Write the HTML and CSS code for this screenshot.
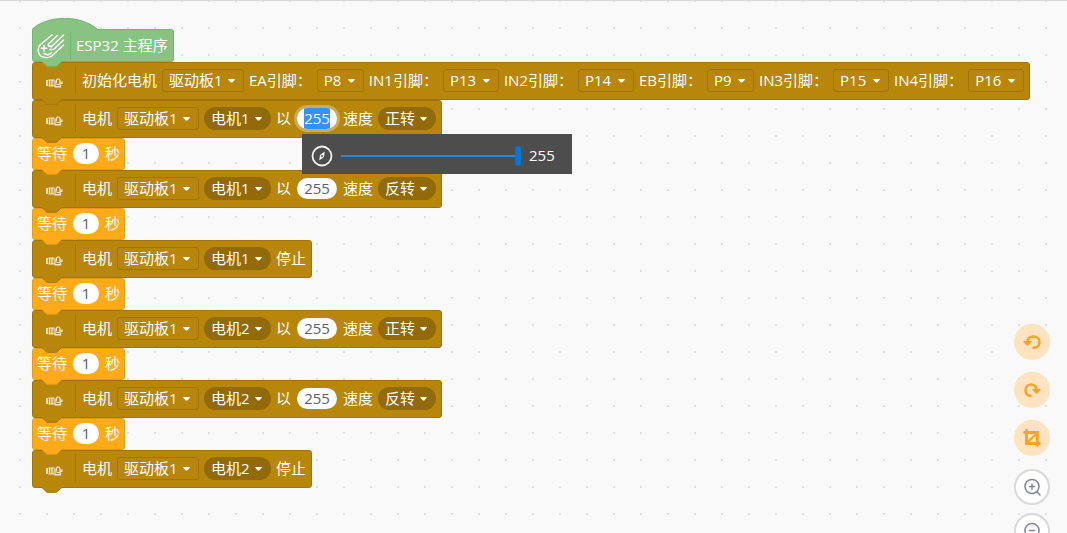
FILE: index.html
```
<!DOCTYPE html>
<html lang="zh-CN">
<head>
    <meta charset="UTF-8">
    <meta name="viewport" content="width=device-width, initial-scale=1.0">
    <title>ESP32 主程序</title>
    <link rel="stylesheet" href="styles.css">
</head>
<body>
    <svg class="sprite" aria-hidden="true">
        <symbol id="tab" viewBox="0 0 24 6">
            <path class="tab-fill" d="M0 0 H24 C21.500 0 21 1 20 2 L18.500 3.500 C17.500 4.800 17 5.300 15.500 5.300 H8 C6.500 5.300 6 4.800 5 3.500 L3.500 2 C2.500 1 2 0 0 0 Z"/>
            <path class="tab-line" d="M0 .3 C2 .3 2.500 1 3.500 2 L5 3.500 C6 4.800 6.500 5.300 8 5.300 H15.500 C17 5.300 17.500 4.800 18.500 3.500 L20 2 C21 1 21.500 .3 24 .3"/>
        </symbol>
        <symbol id="motor" viewBox="0 0 18 12">
            <rect x="1" y="3" width="2" height="6" fill="#fff" fill-opacity=".7"/>
            <rect x="3.500" y="3" width="6" height="6" fill="#fff" fill-opacity=".25"/>
            <g fill="none" stroke="#fff" stroke-opacity=".8">
                <path d="M3.500 3 H9.500 M3.500 9 H9.500 M4.500 3 V9 M7 3 V9" stroke-width="1"/>
                <path d="M9.500 9.800 H15.500 V8" stroke-width="1.500"/>
                <path d="M10 9 V3.500 M11.500 6.500 V3 L12.500 2 H14 L15 3.500 V7.500 H11.500 M15 5 H17 V6.500 H15" stroke-width="1.200"/>
            </g>
        </symbol>
    </svg>

    <main class="workspace">
        <div class="stack">
            <div class="block hat">
                <svg class="hat-top" viewBox="0 0 66 12" aria-hidden="true">
                    <path class="hat-fill" d="M0 12 V11 C17 -3.200 48 -3.200 65 11 V12 Z"/>
                    <path class="hat-line" d="M.5 11 C17 -3.200 48 -3.200 65 11"/>
                </svg>
                <svg class="hat-icon" viewBox="0 0 28 26" aria-hidden="true">
                    <g fill="none" stroke="#fff" stroke-width="1.500" stroke-linecap="round" stroke-linejoin="round">
                        <path d="M15 2 L3.500 11.500 C0 15 .5 21 4.500 23.300 C9 25.500 14 24.500 17 21 L26.500 12"/>
                        <path d="M20.500 2.500 L11.500 11 M26.500 2 L14 14 M26.500 7 L16.500 16.500 M11.500 11 C10.500 12.300 12 14 13.500 13"/>
                        <path d="M7 12.500 V18 M4.300 15.300 H9.700 M13 16.500 H15"/>
                        <path d="M7 20.500 C10 22.300 13 21.500 14.500 19.500"/>
                    </g>
                </svg>
                <span class="divider"></span>
                <span>ESP32 主程序</span>
                <svg class="tab"><use href="#tab"/></svg>
            </div>

            <div class="block motor">
                <svg class="icon" aria-hidden="true"><use href="#motor"/></svg>
                <span class="divider"></span>
                <span>初始化电机</span>
                <span class="drop"><select class="board" aria-label="驱动板"><option>驱动板1</option></select></span>
                <label for="ea">EA引脚：</label>
                <span class="drop"><select id="ea" class="pin"><option>P8</option></select></span>
                <label for="in1">IN1引脚：</label>
                <span class="drop"><select id="in1" class="pin wide"><option>P13</option></select></span>
                <label for="in2">IN2引脚：</label>
                <span class="drop"><select id="in2" class="pin wide"><option>P14</option></select></span>
                <label for="eb">EB引脚：</label>
                <span class="drop"><select id="eb" class="pin"><option>P9</option></select></span>
                <label for="in3">IN3引脚：</label>
                <span class="drop"><select id="in3" class="pin wide"><option>P15</option></select></span>
                <label for="in4">IN4引脚：</label>
                <span class="drop"><select id="in4" class="pin wide"><option>P16</option></select></span>
                <svg class="tab"><use href="#tab"/></svg>
            </div>

            <div class="block motor">
                <svg class="icon" aria-hidden="true"><use href="#motor"/></svg>
                <span class="divider"></span>
                <span>电机</span>
                <span class="drop"><select class="board" aria-label="驱动板"><option>驱动板1</option></select></span>
                <span class="drop"><select class="round which" aria-label="电机"><option>电机1</option></select></span>
                <label for="speed1">以</label>
                <span class="field">
                    <input id="speed1" class="number speed" type="text" value="255">
                    <span class="popup">
                        <svg class="dial" viewBox="0 0 22 22" aria-hidden="true">
                            <circle cx="11" cy="11" r="9.500" fill="none" stroke="#f2f2f2" stroke-width="1.800"/>
                            <path d="M13.800 6.500 L13 12 L8.200 15.500 L9 10 Z" fill="#f2f2f2"/>
                            <circle cx="11" cy="11" r="1" fill="#4d4d4d"/>
                        </svg>
                        <input id="slider" class="slider" type="range" min="0" max="255" value="255" aria-label="速度">
                        <output id="sliderValue" for="slider">255</output>
                    </span>
                </span>
                <span>速度</span>
                <span class="drop"><select class="round turn" aria-label="方向"><option>正转</option><option>反转</option></select></span>
                <svg class="tab"><use href="#tab"/></svg>
            </div>

            <div class="block wait">
                <label for="wait1">等待</label>
                <input id="wait1" class="number" type="text" value="1">
                <span>秒</span>
                <svg class="tab"><use href="#tab"/></svg>
            </div>

            <div class="block motor">
                <svg class="icon" aria-hidden="true"><use href="#motor"/></svg>
                <span class="divider"></span>
                <span>电机</span>
                <span class="drop"><select class="board" aria-label="驱动板"><option>驱动板1</option></select></span>
                <span class="drop"><select class="round which" aria-label="电机"><option>电机1</option></select></span>
                <label for="speed2">以</label>
                <input id="speed2" class="number speed" type="text" value="255">
                <span>速度</span>
                <span class="drop"><select class="round turn" aria-label="方向"><option>反转</option><option>正转</option></select></span>
                <svg class="tab"><use href="#tab"/></svg>
            </div>

            <div class="block wait">
                <label for="wait2">等待</label>
                <input id="wait2" class="number" type="text" value="1">
                <span>秒</span>
                <svg class="tab"><use href="#tab"/></svg>
            </div>

            <div class="block motor">
                <svg class="icon" aria-hidden="true"><use href="#motor"/></svg>
                <span class="divider"></span>
                <span>电机</span>
                <span class="drop"><select class="board" aria-label="驱动板"><option>驱动板1</option></select></span>
                <span class="drop"><select class="round which" aria-label="电机"><option>电机1</option></select></span>
                <span>停止</span>
                <svg class="tab"><use href="#tab"/></svg>
            </div>

            <div class="block wait">
                <label for="wait3">等待</label>
                <input id="wait3" class="number" type="text" value="1">
                <span>秒</span>
                <svg class="tab"><use href="#tab"/></svg>
            </div>

            <div class="block motor">
                <svg class="icon" aria-hidden="true"><use href="#motor"/></svg>
                <span class="divider"></span>
                <span>电机</span>
                <span class="drop"><select class="board" aria-label="驱动板"><option>驱动板1</option></select></span>
                <span class="drop"><select class="round which" aria-label="电机"><option>电机2</option></select></span>
                <label for="speed3">以</label>
                <input id="speed3" class="number speed" type="text" value="255">
                <span>速度</span>
                <span class="drop"><select class="round turn" aria-label="方向"><option>正转</option><option>反转</option></select></span>
                <svg class="tab"><use href="#tab"/></svg>
            </div>

            <div class="block wait">
                <label for="wait4">等待</label>
                <input id="wait4" class="number" type="text" value="1">
                <span>秒</span>
                <svg class="tab"><use href="#tab"/></svg>
            </div>

            <div class="block motor">
                <svg class="icon" aria-hidden="true"><use href="#motor"/></svg>
                <span class="divider"></span>
                <span>电机</span>
                <span class="drop"><select class="board" aria-label="驱动板"><option>驱动板1</option></select></span>
                <span class="drop"><select class="round which" aria-label="电机"><option>电机2</option></select></span>
                <label for="speed4">以</label>
                <input id="speed4" class="number speed" type="text" value="255">
                <span>速度</span>
                <span class="drop"><select class="round turn" aria-label="方向"><option>反转</option><option>正转</option></select></span>
                <svg class="tab"><use href="#tab"/></svg>
            </div>

            <div class="block wait">
                <label for="wait5">等待</label>
                <input id="wait5" class="number" type="text" value="1">
                <span>秒</span>
                <svg class="tab"><use href="#tab"/></svg>
            </div>

            <div class="block motor">
                <svg class="icon" aria-hidden="true"><use href="#motor"/></svg>
                <span class="divider"></span>
                <span>电机</span>
                <span class="drop"><select class="board" aria-label="驱动板"><option>驱动板1</option></select></span>
                <span class="drop"><select class="round which" aria-label="电机"><option>电机2</option></select></span>
                <span>停止</span>
                <svg class="tab"><use href="#tab"/></svg>
            </div>
        </div>

        <div class="tools">
            <div class="tool-group">
                <button class="tool" type="button" aria-label="撤销">
                    <svg viewBox="0 0 20 20">
                        <path d="M5.500 10 C5.500 2.500 17.500 3 17.500 10 C17.500 14 14.500 15.800 11.500 15.800" fill="none" stroke="#f9a32b" stroke-width="2.600" stroke-linecap="round"/>
                        <path d="M2 9.500 H9 L5.500 13 Z" fill="#f9a32b" stroke="#f9a32b" stroke-width="1.500" stroke-linejoin="round"/>
                    </svg>
                </button>
                <button class="tool" type="button" aria-label="重做">
                    <svg viewBox="0 0 20 20">
                        <path d="M14.500 10 C14.500 2.500 3.500 3 3.500 10 C3.500 13.500 5.500 15.500 8.500 15.800" fill="none" stroke="#f9a32b" stroke-width="2.600" stroke-linecap="round"/>
                        <path d="M11 9.500 H18 L14.500 13 Z" fill="#f9a32b" stroke="#f9a32b" stroke-width="1.500" stroke-linejoin="round"/>
                    </svg>
                </button>
                <button class="tool" type="button" aria-label="裁剪">
                    <svg viewBox="0 0 20 20">
                        <path d="M2.500 4.500 H15.500 V17.500 M4.500 2.500 V15.500 H17.500" fill="none" stroke="#f9a32b" stroke-width="2.800" stroke-linecap="round"/>
                        <path d="M6 14 L14 6" fill="none" stroke="#f9a32b" stroke-width="2"/>
                    </svg>
                </button>
            </div>
            <div class="tool-group zoom">
                <button class="tool" type="button" aria-label="放大">
                    <svg viewBox="0 0 20 20">
                        <path d="M14.500 14.500 L18 18 M10 7 V12 M7.500 9.500 H12.500" fill="none" class="lens"/>
                        <circle cx="10" cy="9.500" r="7" fill="none" class="lens"/>
                    </svg>
                </button>
                <button class="tool" type="button" aria-label="缩小">
                    <svg viewBox="0 0 20 20">
                        <path d="M14.500 14.500 L18 18 M7.500 9.500 H12.500" fill="none" class="lens"/>
                        <circle cx="10" cy="9.500" r="7" fill="none" class="lens"/>
                    </svg>
                </button>
            </div>
        </div>
    </main>

    <script>
        const speed = document.getElementById('speed1');
        const slider = document.getElementById('slider');
        const sliderValue = document.getElementById('sliderValue');

        slider.addEventListener('input', function() {
            speed.value = slider.value;
            sliderValue.textContent = slider.value;
        });

        // Start with the first speed field open for editing
        speed.focus();
        speed.select();
    </script>
</body>
</html>
```
FILE: styles.css
```
* {
    box-sizing: border-box;
}
body {
    margin: 0;
    font-family: "Open Sans", "Noto Sans CJK SC", sans-serif;
    font-size: 15px;
    line-height: 21px;
    color: white;
}
button, input, select {
    font: inherit;
    color: inherit;
}
.sprite {
    display: none;
}
.workspace {
    position: relative;
    height: 100vh;
    overflow: hidden;
    padding: 28px 32px;
    border-top: 1px solid #dadada;
    background-color: #f9f9f9;
    background-image: radial-gradient(circle at 1px 1px, #e0e0e0 1px, transparent 1px);
    background-size: 27px 27px;
    background-position: 19px 26px;
}

/* blocks */
.stack {
    display: flex;
    flex-direction: column;
    align-items: flex-start;
}
.block {
    position: relative;
    display: flex;
    align-items: center;
    gap: 5px;
    height: 38px;
    padding: 0 5px 2px;
    border: 1px solid var(--line);
    border-radius: 3px;
    background: var(--fill);
    white-space: nowrap;
}
.hat {
    --fill: #89c381;
    --line: #74b56f;
    height: 33px;
    padding: 0 5px 0 4px;
    border-top-left-radius: 0;
}
.motor {
    --fill: #b8860b;
    --line: #a0740a;
    padding: 0 5px 2px 12px;
}
.wait {
    --fill: #ffab19;
    --line: #e89a14;
    height: 32px;
    padding: 0 4px 2px;
}
.tab {
    position: absolute;
    left: 7px;
    top: 100%;
    z-index: 1;
    width: 24px;
    height: 6px;
}
.tab-fill {
    fill: var(--fill);
}
.tab-line {
    fill: none;
    stroke: var(--line);
}
.hat-top {
    position: absolute;
    left: -1px;
    bottom: 31px;
    width: 66px;
    height: 12px;
}
.hat-fill {
    fill: var(--fill);
}
.hat-line {
    fill: none;
    stroke: var(--line);
}
.hat-icon {
    width: 28px;
    height: 26px;
}
.icon {
    width: 18px;
    height: 12px;
    margin-top: 6px;
}
.divider {
    width: 1px;
    height: 28px;
    background: var(--line);
}
.motor .divider {
    margin: 0 1px 0 7px;
}

/* drop-downs */
.drop {
    position: relative;
    display: flex;
}
.drop::after {
    content: "";
    position: absolute;
    right: 9px;
    top: 10px;
    width: 7px;
    height: 4px;
    border-radius: 1px;
    background: white;
    clip-path: polygon(0 0, 100% 0, 100% 25%, 60% 100%, 40% 100%, 0 25%);
    pointer-events: none;
}
select {
    appearance: none;
    height: 23px;
    padding: 0 6px;
    border: 1px solid #a0740a;
    border-radius: 3px;
    background: transparent;
    line-height: 21px;
}
.board {
    width: 82px;
}
.pin {
    width: 47px;
}
.pin.wide {
    width: 56px;
}
.round {
    padding: 0 7px;
    border: none;
    border-radius: 12px;
    background: #926a09;
}
.which {
    width: 67px;
}
.turn {
    width: 58px;
}
option {
    color: #333;
}

/* number fields */
.number {
    width: 26px;
    height: 21px;
    margin: 0 1px;
    padding: 0;
    border: none;
    border-radius: 11px;
    background: white;
    color: #575e75;
    text-align: center;
    outline: none;
}
.number.speed {
    width: 40px;
}
.number:focus {
    box-shadow: 0 0 0 3px rgba(255, 255, 255, 0.3);
}
.number::selection {
    background: rgba(51, 144, 255, 0.99);
    color: white;
}
.field {
    position: relative;
    display: flex;
}
.popup {
    position: absolute;
    left: 6px;
    top: 26px;
    z-index: 5;
    display: flex;
    align-items: center;
    gap: 8px;
    width: 270px;
    height: 40px;
    padding: 4px 9px 0 9px;
    background: #4d4d4d;
}
.dial {
    width: 22px;
    height: 22px;
}
.slider {
    appearance: none;
    width: 180px;
    height: 20px;
    margin: 0;
    background: transparent;
}
.slider::-webkit-slider-runnable-track {
    height: 2px;
    background: #1f8be0;
}
.slider::-webkit-slider-thumb {
    appearance: none;
    width: 6px;
    height: 20px;
    margin-top: -9px;
    border-radius: 3px;
    background: #0078d7;
}

/* floating buttons */
.tools {
    position: absolute;
    right: 17px;
    top: 323px;
    display: flex;
    flex-direction: column;
    gap: 13px;
}
.tool-group {
    display: flex;
    flex-direction: column;
    gap: 12px;
}
.tool-group.zoom {
    gap: 8px;
}
.tool {
    display: flex;
    align-items: center;
    justify-content: center;
    width: 36px;
    height: 36px;
    padding: 0;
    border: none;
    border-radius: 50%;
    background: #fde3bf;
    cursor: pointer;
}
.tool svg {
    width: 20px;
    height: 20px;
}
.zoom .tool {
    border: 2px solid #d9d9d9;
    background: white;
}
.lens {
    stroke: #7f849b;
    stroke-width: 1.5px;
    stroke-linecap: round;
}
```
